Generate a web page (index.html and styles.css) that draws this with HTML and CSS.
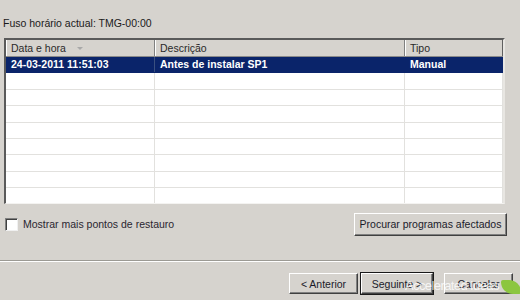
FILE: index.html
```html
<!DOCTYPE html>
<html lang="pt">
<head>
<meta charset="UTF-8">
<title>Restauro do sistema</title>
<link rel="stylesheet" href="styles.css">
</head>
<body>

<div class="dialog">
    <p class="tz">Fuso horário actual: TMG-00:00</p>

    <div class="list">
        <div class="row head">
            <div class="cell c1">Data e hora <span class="sort"></span></div>
            <div class="cell c2">Descrição</div>
            <div class="cell c3">Tipo</div>
        </div>
        <div class="row sel">
            <div class="cell c1">24-03-2011 11:51:03</div>
            <div class="cell c2">Antes de instalar SP1</div>
            <div class="cell c3">Manual</div>
        </div>
        <div class="row"><div class="cell c1"></div><div class="cell c2"></div><div class="cell c3"></div></div>
        <div class="row"><div class="cell c1"></div><div class="cell c2"></div><div class="cell c3"></div></div>
        <div class="row"><div class="cell c1"></div><div class="cell c2"></div><div class="cell c3"></div></div>
        <div class="row"><div class="cell c1"></div><div class="cell c2"></div><div class="cell c3"></div></div>
        <div class="row"><div class="cell c1"></div><div class="cell c2"></div><div class="cell c3"></div></div>
        <div class="row"><div class="cell c1"></div><div class="cell c2"></div><div class="cell c3"></div></div>
        <div class="row"><div class="cell c1"></div><div class="cell c2"></div><div class="cell c3"></div></div>
        <div class="row"><div class="cell c1"></div><div class="cell c2"></div><div class="cell c3"></div></div>
    </div>

    <div class="options">
        <label class="check"><span class="box"></span>Mostrar mais pontos de restauro</label>
        <button class="btn wide">Procurar programas afectados</button>
    </div>

    <div class="footer">
        <button class="btn">&lt; Anterior</button>
        <button class="btn default">Seguinte &gt;</button>
        <button class="btn cancel">Cancelar</button>
    </div>

    <div class="watermark">Accelerated Ideas<span class="leaf"></span></div>
</div>

</body>
</html>
```

FILE: styles.css
```css
body {
    margin: 0;
    background-color: #d6d3ce;
    font-family: "Liberation Sans", Arial, sans-serif;
    font-size: 10.5px;
    color: #1a1a1a;
}
.dialog {
    position: relative;
    width: 520px;
    height: 300px;
    overflow: hidden;
}
.tz {
    margin: 0;
    padding: 16px 0 0 3px;
    line-height: 14px;
    height: 14px;
    margin-bottom: 8px;
}
.list {
    margin-left: 4px;
    width: 501px;
    height: 166px;
    box-sizing: border-box;
    background-color: #ffffff;
    border-top: 2px solid #5a5a5a;
    border-left: 2px solid #5a5a5a;
    border-right: 2px solid #e8e6e2;
    border-bottom: 1px solid #f4f3f1;
    overflow: hidden;
}
.row {
    display: grid;
    grid-template-columns: 149px 250px 1fr;
    height: 16.4px;
    box-sizing: border-box;
    border-bottom: 1px solid #e2e1de;
}
.cell {
    line-height: 15px;
    padding-left: 5px;
    border-right: 1px solid #e2e1de;
    white-space: nowrap;
}
.head {
    height: 17px;
    background-color: #d6d3ce;
    border-bottom: 1px solid #8a8a8a;
}
.head .cell {
    line-height: 16px;
    border-right: 1px solid #808080;
    box-shadow: inset 1px 0 0 #ffffff;
    color: #2a2a2a;
}
.head .c3 {
    border-right: 1px solid #606060;
}
.sort {
    display: inline-block;
    margin-left: 8px;
    vertical-align: 2px;
    border-left: 3px solid transparent;
    border-right: 3px solid transparent;
    border-top: 3px solid #a8a8a8;
}
.sel {
    background-color: #0a246a;
    color: #ffffff;
    font-weight: bold;
    border-bottom: 1px solid #0a246a;
}
.sel .cell {
    border-right: 1px solid #0a246a;
}
.sel .c1 {
    border-right-color: #3a5080;
}
.options {
    display: flex;
    justify-content: space-between;
    align-items: center;
    margin-top: 9px;
    padding: 0 13px 0 5px;
    height: 22px;
}
.check {
    display: flex;
    align-items: center;
    color: #2a2630;
}
.box {
    width: 11px;
    height: 11px;
    margin-right: 5px;
    background-color: #ffffff;
    border-top: 1px solid #808080;
    border-left: 1px solid #808080;
    border-right: 1px solid #f0f0f0;
    border-bottom: 1px solid #f0f0f0;
    box-shadow: inset 1px 1px 0 #404040;
}
.btn {
    font-family: "Liberation Sans", Arial, sans-serif;
    font-size: 10.5px;
    color: #1a1a2a;
    background-color: #d6d3ce;
    height: 21px;
    padding: 0;
    white-space: nowrap;
    border-top: 1px solid #ffffff;
    border-left: 1px solid #ffffff;
    border-right: 1px solid #404040;
    border-bottom: 1px solid #404040;
    box-shadow: inset -1px -1px 0 #808080;
}
.wide {
    height: 23px;
    width: 153px;
}
.footer {
    margin-top: 25px;
    border-top: 1px solid #9c9a94;
    box-shadow: inset 0 1px 0 #ffffff;
    display: flex;
    justify-content: flex-end;
    gap: 3px;
    padding: 12px 7px 0 0;
}
.footer .btn {
    width: 69px;
}
.default {
    width: 72px !important;
    outline: 1px solid #1a1a1a;
    outline-offset: 0;
}
.cancel {
    margin-left: 8px;
}
.watermark {
    position: absolute;
    left: 405px;
    top: 276px;
    font-size: 13px;
    letter-spacing: -0.6px;
    white-space: nowrap;
    color: rgba(255, 255, 255, 0.8);
    display: flex;
    align-items: center;
}
.leaf {
    display: inline-block;
    width: 20px;
    height: 14px;
    margin-left: 2px;
    margin-top: 4px;
    background-color: #8cc63f;
    border-radius: 2px 12px 2px 12px;
}
```
